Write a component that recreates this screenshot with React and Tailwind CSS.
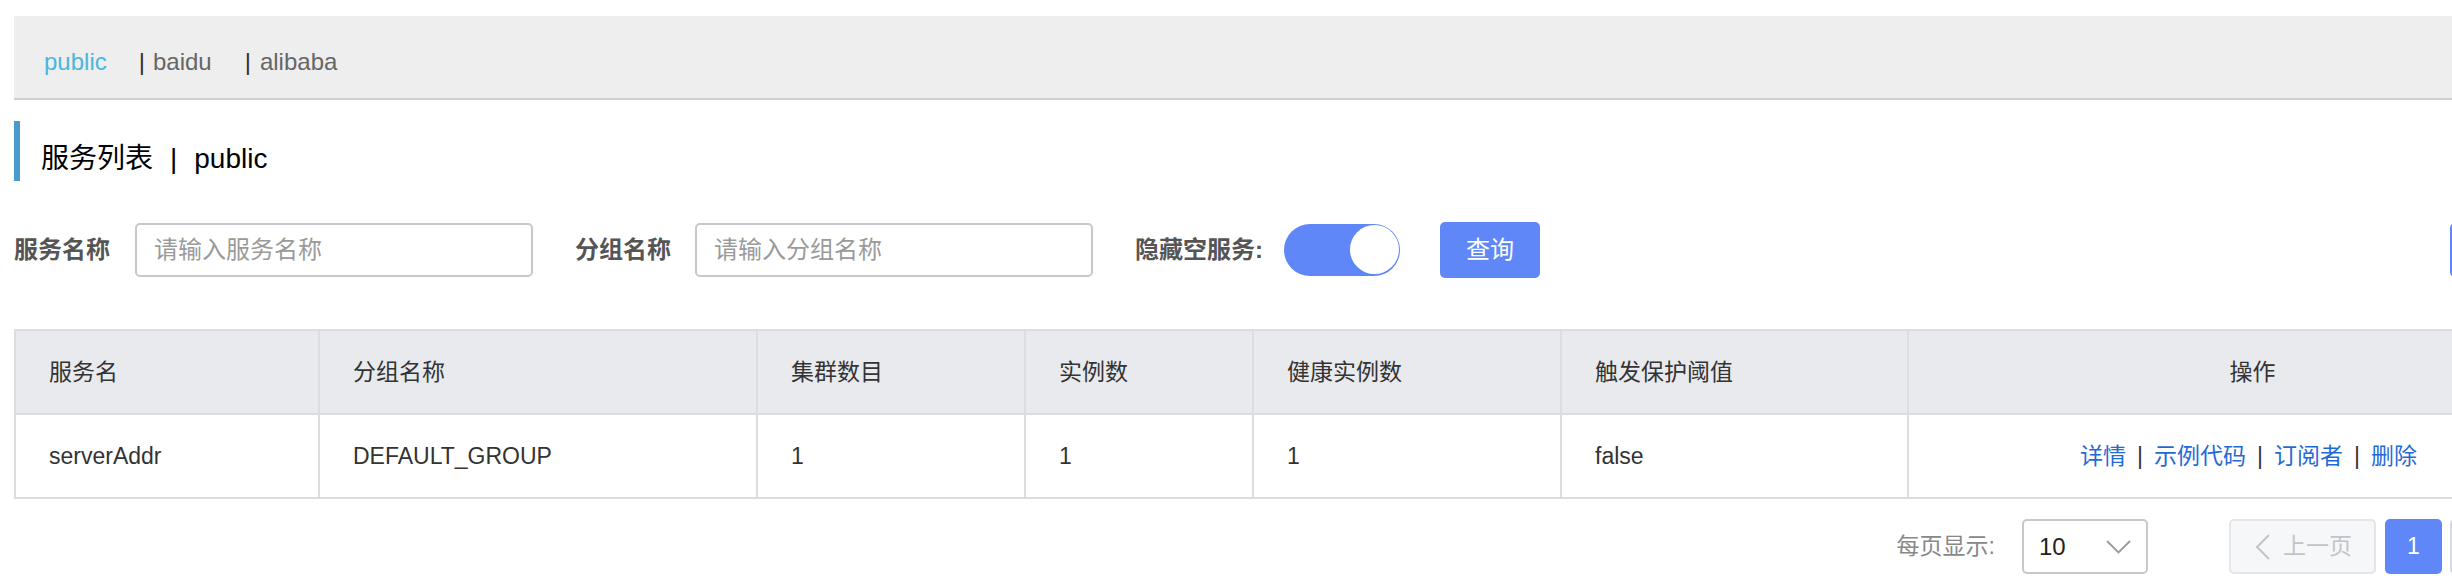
import React from 'react';

const font = "font-['Liberation_Sans','Noto_Sans_CJK_SC',sans-serif]";

const columns = [
  { title: '服务名', width: 'w-[304px]' },
  { title: '分组名称', width: 'w-[438px]' },
  { title: '集群数目', width: 'w-[268px]' },
  { title: '实例数', width: 'w-[228px]' },
  { title: '健康实例数', width: 'w-[308px]' },
  { title: '触发保护阈值', width: 'w-[347px]' },
];

const row = ['serverAddr', 'DEFAULT_GROUP', '1', '1', '1', 'false'];

const actions = ['详情', '示例代码', '订阅者', '删除'];

const App = () => {
  return (
    <div className={`w-[2452px] h-[588px] overflow-hidden bg-white ${font}`}>
      <div className="ml-[14px] w-[2584px] pt-[16px]">
        {/* Namespace tabs */}
        <div className="h-[84px] bg-[#eeeeee] border-b-2 border-[#d0d0d0] flex items-center pl-[30px] pt-[10px] text-[24px]">
          <span className="text-[#4ab6de]">public</span>
          <span className="ml-[32px] text-[#333]">|</span>
          <span className="ml-[8px] text-[#666]">baidu</span>
          <span className="ml-[33px] text-[#333]">|</span>
          <span className="ml-[9px] text-[#666]">alibaba</span>
        </div>

        {/* Title */}
        <div className="mt-[21px] h-[60px] border-l-[6px] border-[#4a9ad0] flex items-center pl-[21px] pt-[15px] text-[28px] text-black">
          <span>服务列表</span>
          <span className="ml-[17px]">|</span>
          <span className="ml-[17px]">public</span>
        </div>

        {/* Search form */}
        <div className="mt-[41px] h-[55px] flex items-center text-[24px]">
          <span className="w-[121px] font-bold text-[#555]">服务名称</span>
          <div className="w-[398px] h-[54px] border-2 border-[#c6c8ce] rounded-[5px] flex items-center pl-[17px] text-[#9a9a9a]">
            请输入服务名称
          </div>
          <span className="ml-[42px] w-[120px] font-bold text-[#555]">分组名称</span>
          <div className="w-[398px] h-[54px] border-2 border-[#c6c8ce] rounded-[5px] flex items-center pl-[17px] text-[#9a9a9a]">
            请输入分组名称
          </div>
          <span className="ml-[42px] w-[149px] font-bold text-[#555]">隐藏空服务:</span>
          <div className="w-[116px] h-[52px] rounded-full bg-[#5f87f8] flex items-center justify-end pr-[1px]">
            <div className="w-[49px] h-[49px] rounded-full bg-white" />
          </div>
          <div className="ml-[40px] w-[100px] h-[56px] rounded-[5px] bg-[#5f87f8] text-white flex items-center justify-center">
            查询
          </div>
          {/* button cut off at the right edge of the viewport */}
          <div className="ml-auto w-[148px] h-[54px] rounded-[5px] bg-[#5f87f8]" />
        </div>

        {/* Table */}
        <div className="mt-[52px] border-2 border-[#dcdde3] text-[23px] text-[#333]">
          <div className="flex h-[84px] bg-[#e9eaee] border-b-2 border-[#dcdde3]">
            {columns.map((c) => (
              <div key={c.title} className={`${c.width} shrink-0 border-r-2 border-[#dcdde3] flex items-center pl-[33px]`}>
                {c.title}
              </div>
            ))}
            <div className="flex-1 flex items-center justify-center">操作</div>
          </div>
          <div className="flex h-[82px]">
            {columns.map((c, i) => (
              <div key={c.title} className={`${c.width} shrink-0 border-r-2 border-[#dcdde3] flex items-center pl-[33px]`}>
                {row[i]}
              </div>
            ))}
            <div className="flex-1 flex items-center justify-center pr-[8px]">
              {actions.map((a, i) => (
                <React.Fragment key={a}>
                  {i > 0 && <span className="mx-[11px] text-[#333]">|</span>}
                  <span className="text-[#1f6bd6]">{a}</span>
                </React.Fragment>
              ))}
            </div>
          </div>
        </div>

        {/* Pagination */}
        <div className="mt-[20px] h-[55px] flex items-center justify-end text-[23px]">
          <span className="text-[#888]">每页显示:</span>
          <div className="ml-[27px] w-[126px] h-[55px] border-2 border-[#c6c8ce] rounded-[5px] flex items-center pl-[15px] pr-[15px] text-[24px] text-[#222]">
            <span>10</span>
            <svg className="ml-auto" width="25" height="14" viewBox="0 0 25 14" fill="none">
              <polyline points="1,1 12.5,12.5 24,1" stroke="#9a9a9a" strokeWidth="1.8" />
            </svg>
          </div>
          <div className="ml-[81px] w-[147px] h-[55px] border-2 border-[#e4e5e9] bg-[#f6f7f9] rounded-[5px] flex items-center pl-[24px] text-[#c2c4ca]">
            <svg width="16" height="26" viewBox="0 0 16 26" fill="none">
              <polyline points="14,1 2,13 14,25" stroke="#c2c4ca" strokeWidth="2" />
            </svg>
            <span className="ml-[12px]">上一页</span>
          </div>
          <div className="ml-[9px] w-[57px] h-[55px] rounded-[5px] bg-[#5f87f8] text-white flex items-center justify-center">
            1
          </div>
          {/* next-page button, cut off at the right edge */}
          <div className="ml-[8px] w-[148px] h-[55px] border-2 border-[#d6d8dd] bg-white rounded-[5px]" />
        </div>
      </div>
    </div>
  );
};

export default App;
